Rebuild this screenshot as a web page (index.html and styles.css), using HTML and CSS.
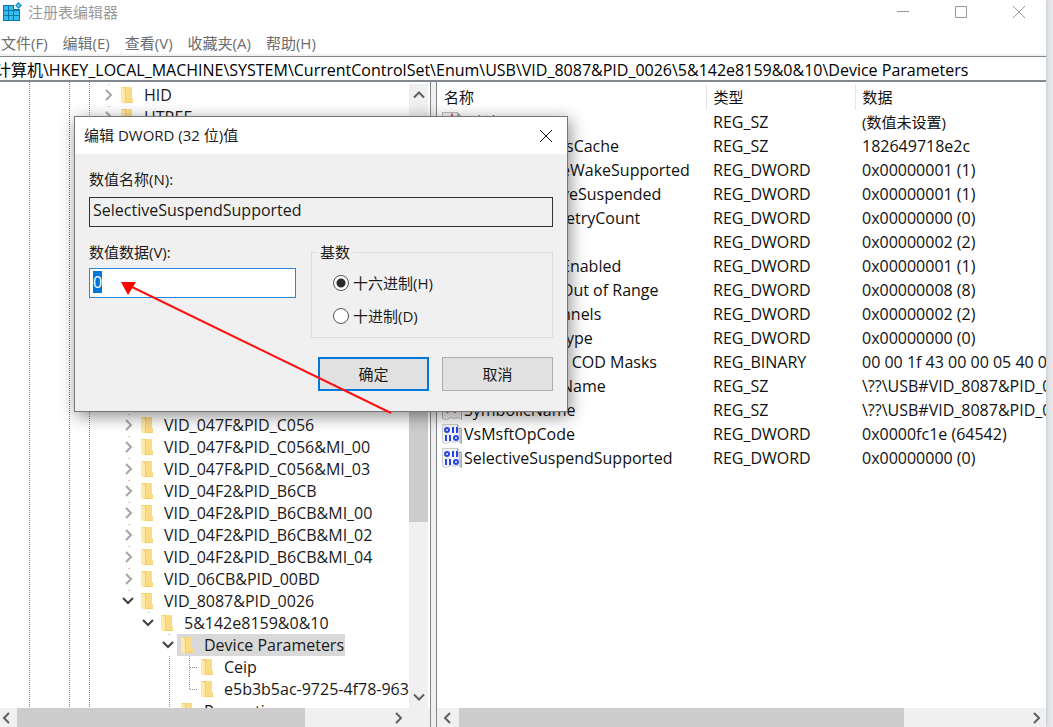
FILE: index.html
```html
<!DOCTYPE html>
<html lang="zh-CN">
<head>
<meta charset="utf-8">
<title>注册表编辑器</title>
<link rel="stylesheet" href="styles.css">
</head>
<body>
<svg class="defs" aria-hidden="true">
  <symbol id="folder" viewBox="0 0 13 18"><path d="M0 1h11v11l1 1v4H3L0 15z" fill="#f5cf6c"/><path d="M5 1h6v12l1 1v2H5z" fill="#fbdc86"/><path d="M0 1l4 2v15l-4-2z" fill="#ffe9a8"/></symbol>
  <symbol id="closed" viewBox="0 0 18 22"><path d="M10 0v1" stroke="#999"/><path d="M7 6l5 5-5 5" fill="none" stroke="#a6a6a6" stroke-width="2"/></symbol>
  <symbol id="open" viewBox="0 0 18 22"><path d="M10 0v1" stroke="#999"/><path d="M4 8l5 5 5-5" fill="none" stroke="#404040" stroke-width="2"/></symbol>
  <symbol id="leaf" viewBox="0 0 18 22"><path d="M11 11.500h7" stroke="#888" stroke-dasharray="1 1"/></symbol>
  <symbol id="binary" viewBox="0 0 20 20"><path d="M.5.5h15l4 4v15l-3-2-4 1-4-1-4 2-4-1z" fill="#f4f6fb" stroke="#c9ccd4"/><path d="M15.500 .5v4h4v15l-2-2" fill="#c4c6cb" stroke="#aaa"/><g fill="none" stroke="#2748e0" stroke-width="2"><rect x="3" y="4" width="4" height="4" rx="2"/><path d="M11 3v6M15 3v6M4 11v6M8 11v6"/><rect x="12" y="12" width="4" height="4" rx="2"/></g></symbol>
  <symbol id="string" viewBox="0 0 20 20"><path d="M.5.5h15l4 4v15l-3-2-4 1-4-1-4 2-4-1z" fill="#f8f4f4" stroke="#b9bcc4"/><path d="M15.500 .5v4h4" fill="#aaa" stroke="#aaa"/><path d="M5 13l5-10 3 10M7 10h5" fill="none" stroke="#c9605c" stroke-width="2"/></symbol>
</svg>
<main class="window">
  <header class="titlebar">
    <svg class="app-icon" viewBox="0 0 20 20"><path d="M1 3h11v4h6v12H1z" fill="#0b76a8"/><g fill="#35bdf0"><path d="M2 4h4v4H2zM7 4h4v4H7zM2 9h4v4H2zM7 9h4v4H7zM2 14h4v4H2zM7 14h4v4H7zM12 9h5v4h-5zM12 14h5v4h-5z"/></g><path d="M16.500 0l3.500 3.500L16.500 7 13 3.500z" fill="#1b92c6"/><path d="M16.500 2L18 3.500 16.500 5 15 3.500z" fill="#7cd4f5"/></svg>
    <h1 class="app-title">注册表编辑器</h1>
    <div class="window-buttons">
      <button class="window-button" aria-label="最小化"><svg viewBox="0 0 14 14"><path d="M1 6.500h12"/></svg></button>
      <button class="window-button" aria-label="最大化"><svg viewBox="0 0 14 14"><path d="M1.500 1.500h11v11h-11z"/></svg></button>
      <button class="window-button" aria-label="关闭"><svg viewBox="0 0 14 14"><path d="M1 1l12 12M13 1L1 13"/></svg></button>
    </div>
  </header>
  <nav class="menubar">
    <button class="menu">文件(F)</button><button class="menu">编辑(E)</button><button class="menu">查看(V)</button><button class="menu">收藏夹(A)</button><button class="menu">帮助(H)</button>
  </nav>
  <input class="address" aria-label="地址" value="计算机\HKEY_LOCAL_MACHINE\SYSTEM\CurrentControlSet\Enum\USB\VID_8087&amp;PID_0026\5&amp;142e8159&amp;0&amp;10\Device Parameters">
  <div class="panes">
    <section class="tree-pane">
      <div class="tree-view">
        <ul class="tree">
          <li class="row"><svg class="toggle"><use href="#closed"/></svg><span class="node"><svg class="folder"><use href="#folder"/></svg>HID</span></li>
          <li class="row"><svg class="toggle"><use href="#closed"/></svg><span class="node"><svg class="folder"><use href="#folder"/></svg>HTREE</span></li>
          <li class="covered"></li>
          <li><ul class="branch">
            <li class="row"><svg class="toggle"><use href="#closed"/></svg><span class="node"><svg class="folder"><use href="#folder"/></svg>VID_046D&amp;PID_C52B&amp;MI_02</span></li>
            <li class="row"><svg class="toggle"><use href="#closed"/></svg><span class="node"><svg class="folder"><use href="#folder"/></svg>VID_047F&amp;PID_C056</span></li>
            <li class="row"><svg class="toggle"><use href="#closed"/></svg><span class="node"><svg class="folder"><use href="#folder"/></svg>VID_047F&amp;PID_C056&amp;MI_00</span></li>
            <li class="row"><svg class="toggle"><use href="#closed"/></svg><span class="node"><svg class="folder"><use href="#folder"/></svg>VID_047F&amp;PID_C056&amp;MI_03</span></li>
            <li class="row"><svg class="toggle"><use href="#closed"/></svg><span class="node"><svg class="folder"><use href="#folder"/></svg>VID_04F2&amp;PID_B6CB</span></li>
            <li class="row"><svg class="toggle"><use href="#closed"/></svg><span class="node"><svg class="folder"><use href="#folder"/></svg>VID_04F2&amp;PID_B6CB&amp;MI_00</span></li>
            <li class="row"><svg class="toggle"><use href="#closed"/></svg><span class="node"><svg class="folder"><use href="#folder"/></svg>VID_04F2&amp;PID_B6CB&amp;MI_02</span></li>
            <li class="row"><svg class="toggle"><use href="#closed"/></svg><span class="node"><svg class="folder"><use href="#folder"/></svg>VID_04F2&amp;PID_B6CB&amp;MI_04</span></li>
            <li class="row"><svg class="toggle"><use href="#closed"/></svg><span class="node"><svg class="folder"><use href="#folder"/></svg>VID_06CB&amp;PID_00BD</span></li>
            <li class="row"><svg class="toggle"><use href="#open"/></svg><span class="node"><svg class="folder"><use href="#folder"/></svg>VID_8087&amp;PID_0026</span></li>
            <li><ul class="branch">
              <li class="row"><svg class="toggle"><use href="#open"/></svg><span class="node"><svg class="folder"><use href="#folder"/></svg>5&amp;142e8159&amp;0&amp;10</span></li>
              <li><ul class="branch">
                <li class="row"><svg class="toggle"><use href="#open"/></svg><span class="node selected"><svg class="folder"><use href="#folder"/></svg>Device Parameters</span></li>
                <li class="guided"><ul class="branch">
                  <li class="row child"><svg class="toggle"><use href="#leaf"/></svg><span class="node"><svg class="folder"><use href="#folder"/></svg>Ceip</span></li>
                  <li class="row child last"><svg class="toggle"><use href="#leaf"/></svg><span class="node"><svg class="folder"><use href="#folder"/></svg>e5b3b5ac-9725-4f78-963</span></li>
                </ul></li>
                <li class="row child"><svg class="toggle"></svg><span class="node"><svg class="folder"><use href="#folder"/></svg>Properties</span></li>
              </ul></li>
            </ul></li>
          </ul></li>
        </ul>
        <div class="vscroll">
          <svg class="arrow" viewBox="0 0 19 19"><path d="M5 12l5-5 5 5"/></svg>
          <div class="vtrack"><div class="vthumb"></div></div>
          <svg class="arrow" viewBox="0 0 19 19"><path d="M5 7l5 5 5-5"/></svg>
        </div>
      </div>
      <div class="hscroll">
        <svg class="arrow" viewBox="0 0 17 19"><path d="M9 5L4 10l5 5"/></svg>
        <div class="htrack"><div class="hthumb tree-thumb"></div></div>
        <svg class="arrow" viewBox="0 0 17 19"><path d="M5 5l5 5-5 5"/></svg>
        <span class="corner"></span>
      </div>
    </section>
    <section class="value-pane">
      <div class="value-view">
        <table class="values">
          <thead><tr><th class="col-name">名称</th><th class="col-type">类型</th><th>数据</th></tr></thead>
          <tbody>
            <tr><td class="name local"><svg class="kind"><use href="#string"/></svg>(默认)</td><td>REG_SZ</td><td class="local">(数值未设置)</td></tr>
            <tr><td class="name tail">sCache</td><td>REG_SZ</td><td>182649718e2c</td></tr>
            <tr><td class="name tail-wide">eWakeSupported</td><td>REG_DWORD</td><td>0x00000001 (1)</td></tr>
            <tr><td class="name tail-wide">veSuspended</td><td>REG_DWORD</td><td>0x00000001 (1)</td></tr>
            <tr><td class="name tail">etryCount</td><td>REG_DWORD</td><td>0x00000000 (0)</td></tr>
            <tr><td class="name"></td><td>REG_DWORD</td><td>0x00000002 (2)</td></tr>
            <tr><td class="name tail-wide">Enabled</td><td>REG_DWORD</td><td>0x00000001 (1)</td></tr>
            <tr><td class="name tail-wide">Out of Range</td><td>REG_DWORD</td><td>0x00000008 (8)</td></tr>
            <tr><td class="name tail-wide">nnels</td><td>REG_DWORD</td><td>0x00000002 (2)</td></tr>
            <tr><td class="name tail">ype</td><td>REG_DWORD</td><td>0x00000000 (0)</td></tr>
            <tr><td class="name tail-wide">r COD Masks</td><td>REG_BINARY</td><td>00 00 1f 43 00 00 05 40 00 00</td></tr>
            <tr><td class="name tail-wide">Name</td><td>REG_SZ</td><td>\??\USB#VID_8087&amp;PID_0026</td></tr>
            <tr><td class="name"><svg class="kind"><use href="#string"/></svg>SymbolicName</td><td>REG_SZ</td><td>\??\USB#VID_8087&amp;PID_0026</td></tr>
            <tr><td class="name"><svg class="kind"><use href="#binary"/></svg>VsMsftOpCode</td><td>REG_DWORD</td><td>0x0000fc1e (64542)</td></tr>
            <tr><td class="name"><svg class="kind"><use href="#binary"/></svg>SelectiveSuspendSupported</td><td>REG_DWORD</td><td>0x00000000 (0)</td></tr>
          </tbody>
        </table>
      </div>
      <div class="hscroll">
        <svg class="arrow" viewBox="0 0 17 19"><path d="M13 5l-5 5 5 5"/></svg>
        <div class="htrack value-track"><div class="hthumb value-thumb"></div></div>
        <svg class="arrow" viewBox="0 0 17 19"><path d="M5 5l5 5-5 5"/></svg>
      </div>
    </section>
  </div>
</main>
<form class="dialog" role="dialog" aria-labelledby="dialog-title">
  <header class="dialog-bar">
    <h2 class="dialog-title" id="dialog-title">编辑 DWORD (32 位)值</h2>
    <button class="dialog-close" type="button" aria-label="关闭"><svg viewBox="0 0 14 14"><path d="M1 1l12 12M13 1L1 13"/></svg></button>
  </header>
  <div class="dialog-body">
    <label class="label" for="value-name">数值名称(N):</label>
    <input class="field readonly" id="value-name" readonly value="SelectiveSuspendSupported">
    <div class="columns">
      <div class="data">
        <label class="label" for="value-data">数值数据(V):</label>
        <input class="field active" id="value-data" value="0">
      </div>
      <fieldset class="base">
        <legend>基数</legend>
        <label class="choice"><input type="radio" name="base" checked>十六进制(H)</label>
        <label class="choice"><input type="radio" name="base">十进制(D)</label>
      </fieldset>
    </div>
    <div class="actions">
      <button class="action default" type="button">确定</button>
      <button class="action" type="button">取消</button>
    </div>
  </div>
</form>
<svg class="pointer" viewBox="0 0 274 134" aria-hidden="true"><path d="M12 6l259 126" stroke="#f11" stroke-width="2"/><path d="M1 1l15 0-8 13z" fill="#f00"/></svg>
<script src="script.js"></script>
</body>
</html>
```
FILE: script.js
```js
const data = document.getElementById("value-data");
data.focus();
data.select();
```
FILE: styles.css
```css
* { box-sizing: border-box; }
body {
  margin: 0;
  height: 100vh;
  overflow: hidden;
  position: relative;
  background: #e6e8ea;
  color: #1a1a1a;
  font: 15px/22px "Open Sans", "Noto Sans CJK SC", sans-serif;
}
button, input { font: inherit; color: inherit; }
button { border: 0; padding: 0; background: none; }
ul { list-style: none; margin: 0; padding: 0; }
h1, h2 { margin: 0; font-size: 15px; font-weight: 400; }
svg { display: block; flex: none; fill: none; }
.defs { position: absolute; width: 0; height: 0; }

.window {
  display: flex;
  flex-direction: column;
  height: 100%;
  margin-right: 7px;
  background: #fff;
  box-shadow: 0 0 5px #b4b8bc;
}
.titlebar { display: flex; align-items: center; height: 24px; padding-left: 2px; }
.app-icon { width: 20px; height: 20px; }
.app-title { margin-left: 6px; color: #999; }
.window-buttons { display: flex; margin-left: auto; }
.window-button { display: flex; justify-content: flex-end; width: 58px; padding-right: 20px; stroke: #999; }
.window-button svg { width: 14px; height: 14px; }
.menubar { display: flex; gap: 15px; height: 32px; padding: 7px 0 0 1px; border-bottom: 2px solid #f0f0f0; color: #6d6d6d; line-height: 22px; }
.address {
  width: 100%;
  height: 26px;
  flex: none;
  padding: 0;
  margin: 0;
  border: solid #82878f;
  border-width: 1px 0 2px;
  border-radius: 0;
  outline: 0;
  background: #fff;
  color: #000;
  text-indent: -5px;
  font-size: 16px;
}

.panes { display: flex; flex: 1; min-height: 0; background: #f0f0f0; gap: 5px; }
.tree-pane, .value-pane { display: flex; flex-direction: column; background: #fff; min-width: 0; }
.tree-pane { width: 431px; flex: none; border-right: 1px solid #82878f; }
.value-pane { flex: 1; border-left: 1px solid #82878f; }
.tree-view { display: flex; flex: 1; min-height: 0; padding-right: 2px; }
.tree {
  flex: 1;
  min-width: 0;
  overflow: hidden;
  padding: 2px 0 0 99px;
  font-size: 16px;
  white-space: nowrap;
  background:
    repeating-linear-gradient(#888 0 1px, #fff 1px 2px) 29px 0 / 1px 100% no-repeat,
    repeating-linear-gradient(#888 0 1px, #fff 1px 2px) 69px 0 / 1px 100% no-repeat,
    repeating-linear-gradient(#888 0 1px, #fff 1px 2px) 89px 0 / 1px 100% no-repeat;
}
.branch { padding-left: 20px; }
.row { display: flex; height: 22px; }
.covered { height: 264px; }
.toggle { width: 18px; height: 22px; }
.node { display: flex; align-items: center; gap: 10px; padding: 0 1px 0 4px; }
.folder { width: 13px; height: 18px; }
.selected { background: #d9d9d9; }
.guided, .child { background: repeating-linear-gradient(#999 0 1px, #fff 1px 2px) 10px 0 / 1px 100% no-repeat; }
.last { background-size: 1px 12px; }

.arrow { stroke: #606060; stroke-width: 2; }
.vscroll { display: flex; flex-direction: column; width: 19px; margin: 2px 0 0; background: #f0f0f0; }
.vscroll .arrow { width: 19px; height: 22px; }
.vtrack { flex: 1; display: flex; flex-direction: column; justify-content: flex-end; padding-bottom: 164px; }
.vthumb { height: 24%; min-height: 120px; background: #cdcdcd; }
.hscroll { display: flex; height: 19px; flex: none; background: #f0f0f0; }
.hscroll .arrow { width: 17px; height: 19px; }
.htrack { flex: 1; }
.value-track { margin-left: 5px; }
.hthumb { height: 100%; background: #cdcdcd; }
.tree-thumb { width: 77%; }
.value-thumb { width: 78%; }
.corner { width: 22px; }

.value-view { flex: 1; min-height: 0; overflow: hidden; padding-top: 2px; }
.values { width: 100%; table-layout: fixed; border-collapse: collapse; white-space: nowrap; color: #111; }
.values th { height: 26px; padding: 0 7px; font-weight: 400; text-align: left; border-right: 1px solid #e5e5e5; }
.values th:last-child { border: 0; }
.col-name { width: 269px; }
.col-type { width: 149px; }
.values td { height: 24px; padding: 0 7px; overflow: hidden; font-size: 16px; }
.values .local { font-size: 15px; }
.values .name { position: relative; padding-left: 27px; }
.kind { position: absolute; left: 5px; top: 2px; width: 20px; height: 20px; }
.values .tail { padding-left: 129px; }
.values .tail-wide { padding-left: 124px; }

.dialog {
  position: absolute;
  left: 74px;
  top: 116px;
  width: 494px;
  border: 1px solid #777;
  background: #f0f0f0;
  box-shadow: 2px 4px 16px rgba(0, 0, 0, .45);
}
.dialog-bar { display: flex; justify-content: space-between; height: 37px; padding: 0 14px 0 9px; align-items: center; background: #fff; }
.dialog-title { padding-bottom: 2px; }
.dialog-close { stroke: #111; }
.dialog-close svg { width: 14px; height: 14px; }
.dialog-body { padding: 14px; }
.label { display: block; height: 29px; }
.field { display: block; width: 100%; height: 30px; padding: 0 3px; border: 1px solid #333; border-radius: 0; outline: 0; font-size: 16px; }
.readonly { background: #f0f0f0; padding-bottom: 4px; }
.active { border-color: #2a86d8; background: #fff; padding-bottom: 3px; }
.active::selection { background: #0078d7; color: #fff; }
.columns { display: flex; gap: 15px; margin-top: 12px; }
.data { width: 207px; padding-top: 2px; }
.data .label { height: 27px; }
.base { flex: 1; height: 96px; margin: 3px 0 0; padding: 0 21px; border: 1px solid #dcdcdc; }
.base legend { margin-left: -16px; padding: 0 3px; line-height: 20px; }
.choice { display: flex; align-items: center; gap: 4px; height: 33px; }
.choice:first-of-type { margin-top: 4px; }
.choice input {
  appearance: none;
  width: 16px;
  height: 16px;
  margin: 0;
  border: 1px solid #555;
  border-radius: 50%;
  background: #fff;
}
.choice input:checked { background: radial-gradient(circle, #2b2b2b 0 4px, #fff 5px); }
.actions { display: flex; justify-content: flex-end; gap: 13px; padding: 19px 0 6px; }
.action { width: 111px; height: 34px; border: 1px solid #adadad; background: #e1e1e1; }
.default { border: 2px solid #0078d7; }
.pointer { position: absolute; left: 120px; top: 281px; width: 274px; height: 134px; }
```
